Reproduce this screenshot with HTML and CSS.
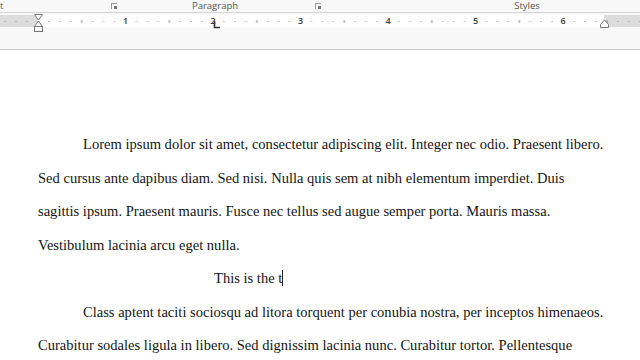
FILE: index.html
```html
<!DOCTYPE html>
<html>
<head>
<meta charset="utf-8">
<link rel="stylesheet" href="styles.css">
</head>
<body>
<div class="app">
  <div class="groups">
    <div class="group g-font"><span class="glabel">t</span><span class="launch"></span></div>
    <div class="group g-para"><span class="glabel">Paragraph</span><span class="launch"></span></div>
    <div class="group g-styles"><span class="glabel">Styles</span></div>
  </div>
  <div class="rulerbar">
    <svg class="ruler" width="640" height="36" viewBox="0 0 640 36">
      <defs>
        <pattern id="ticks" x="38" y="0" width="87.5" height="36" patternUnits="userSpaceOnUse">
          <rect x="10.4" y="8" width="1" height="1" fill="#8a8a8a"/>
          <rect x="21.4" y="8" width="1" height="1" fill="#8a8a8a"/>
          <rect x="32.3" y="8" width="1" height="1" fill="#8a8a8a"/>
          <rect x="43.3" y="7" width="1" height="3" fill="#8a8a8a"/>
          <rect x="54.2" y="8" width="1" height="1" fill="#8a8a8a"/>
          <rect x="65.1" y="8" width="1" height="1" fill="#8a8a8a"/>
          <rect x="76.1" y="8" width="1" height="1" fill="#8a8a8a"/>
        </pattern>
      </defs>
      <rect x="0" y="2" width="640" height="12" fill="#dcdcdc"/>
      <rect x="38" y="2" width="566" height="12" fill="#ffffff"/>
      <rect x="0" y="2" width="640" height="12" fill="url(#ticks)"/>
      <g class="nums" font-family="Open Sans, sans-serif" font-size="9" font-weight="600" fill="#3a3a3a" text-anchor="middle">
        <text x="125.5" y="11">1</text>
        <text x="213" y="11">2</text>
        <text x="300.5" y="11">3</text>
        <text x="388" y="11">4</text>
        <text x="475.5" y="11">5</text>
        <text x="563" y="11">6</text>
      </g>
      <path d="M34.5 1.5 H42.5 L38.5 7 Z" fill="#fff" stroke="#777" stroke-width="1"/>
      <path d="M38.5 8 L42.5 13.5 H34.5 Z" fill="#fff" stroke="#777" stroke-width="1"/>
      <rect x="34.5" y="13.5" width="8" height="5" fill="#fff" stroke="#777" stroke-width="1"/>
      <path d="M214.5 8 V14.5 H220" fill="none" stroke="#333" stroke-width="1.6"/>
      <path d="M604.5 7 L608.5 11.5 V14.5 H600.5 V11.5 Z" fill="#fff" stroke="#777" stroke-width="1"/>
    </svg>
  </div>
  <div class="doc">
    <p class="para">
      <span class="line first">Lorem ipsum dolor sit amet, consectetur adipiscing elit. Integer nec odio. Praesent libero.</span>
      <span class="line">Sed cursus ante dapibus diam. Sed nisi. Nulla quis sem at nibh elementum imperdiet. Duis</span>
      <span class="line">sagittis ipsum. Praesent mauris. Fusce nec tellus sed augue semper porta. Mauris massa.</span>
      <span class="line">Vestibulum lacinia arcu eget nulla.</span>
    </p>
    <p class="para tabline"><span class="line"><span class="typed">This is the t</span><span class="caret"></span></span></p>
    <p class="para">
      <span class="line first">Class aptent taciti sociosqu ad litora torquent per conubia nostra, per inceptos himenaeos.</span>
      <span class="line">Curabitur sodales ligula in libero. Sed dignissim lacinia nunc. Curabitur tortor. Pellentesque</span>
    </p>
  </div>
</div>
</body>
</html>
```

FILE: styles.css
```css
html, body {
  margin: 0;
  padding: 0;
  background: #ffffff;
  overflow: hidden;
}
.app {
  width: 640px;
  height: 360px;
  display: flex;
  flex-direction: column;
  overflow: hidden;
}
.groups {
  height: 12px;
  display: flex;
  background: #f8f8f8;
  border-bottom: 1px solid #d4d4d4;
  font-family: "Open Sans", "Noto Sans", sans-serif;
  font-size: 9.5px;
  line-height: 11px;
  color: #555;
}
.group {
  position: relative;
  height: 12px;
  display: flex;
  align-items: flex-start;
}
.g-font { width: 120px; }
.g-para { width: 204px; justify-content: center; }
.g-styles { flex: 1; justify-content: center; padding-left: 90px; }
.g-para .glabel { margin-left: -14px; }
.launch {
  position: absolute;
  top: 3px;
  right: 3px;
  width: 5px;
  height: 5px;
  border-top: 1px solid #999;
  border-left: 1px solid #999;
}
.launch::after {
  content: "";
  position: absolute;
  left: 2px;
  top: 2px;
  width: 3px;
  height: 3px;
  background: #777;
}
.rulerbar {
  height: 36px;
  background: #f8f8f8;
  border-bottom: 1px solid #c8c8c8;
}
.ruler { display: block; }
.doc {
  flex: 1;
  background: #ffffff;
  padding: 85px 10px 0 38px;
  font-family: "Liberation Serif", "Times New Roman", serif;
  font-size: 14.55px;
  color: #151515;
  white-space: nowrap;
}
.doc p {
  margin: 0;
  display: flex;
  flex-direction: column;
  gap: 15.5px;
  margin-bottom: 15.5px;
}
.line {
  display: block;
  line-height: 18px;
}
.line.first { padding-left: 45px; }
.tabline .line { padding-left: 176px; }
.caret {
  display: inline-block;
  width: 1px;
  height: 16px;
  background: #222;
  vertical-align: -3px;
}
```
